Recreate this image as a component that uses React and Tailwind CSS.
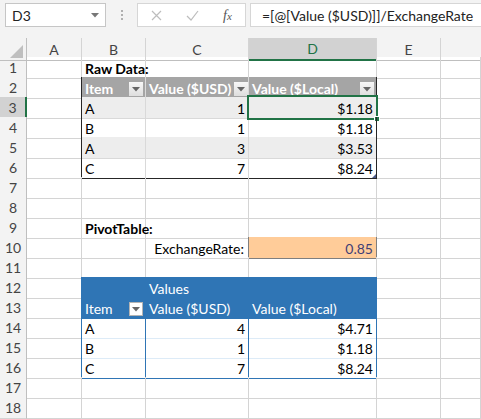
const COLS = 'grid grid-cols-[27px_55px_64px_103px_128px_64px_1fr]'

function Cell({ children, r = 'border-r-[#d4d4d4]', b = 'border-b-[#d4d4d4]', className = '', align = 'justify-start' }) {
  return (
    <div className={`flex items-end border-r border-b ${r} ${b} ${align} ${className}`}>
      {children}
    </div>
  )
}

function Txt({ children, className = '' }) {
  return <span className={`px-[3px] pb-[1px] leading-[17px] whitespace-nowrap ${className}`}>{children}</span>
}

function Drop({ white }) {
  return (
    <span
      className={`mr-[2px] mb-[2px] flex h-[14px] w-[14px] shrink-0 items-center justify-center ${
        white ? 'border border-[#b4b4b4] bg-white' : 'bg-gradient-to-b from-[#f7f7f7] to-[#dedede]'
      }`}
    >
      <svg width="8" height="5" viewBox="0 0 8 5">
        <path d="M0 0h8L4 4.5z" fill="#666" />
      </svg>
    </span>
  )
}

function RowHead({ n, selected }) {
  return (
    <div
      className={`flex items-center justify-center border-b border-b-[#d4d4d4] text-[14px] text-[#444] ${
        selected ? 'border-r-2 border-r-[#217346] bg-[#d2d2d2]' : 'border-r border-r-[#bfbfbf] bg-[#f3f3f3]'
      }`}
    >
      {n}
    </div>
  )
}

function Row({ n, selected, children }) {
  return (
    <div className={`${COLS} h-[20px]`}>
      <RowHead n={n} selected={selected} />
      {children}
    </div>
  )
}

const BK = 'border-r-[#262626]'
const BKb = 'border-b-[#262626]'
const BL = 'border-r-[#2f75b5]'
const BLb = 'border-b-[#2f75b5]'
const LBb = 'border-b-[#ddebf7]'
const GYr = 'border-r-[#d9d9d9]'

const raw = [
  ['A', '1', '$1.18'],
  ['B', '1', '$1.18'],
  ['A', '3', '$3.53'],
  ['C', '7', '$8.24'],
]
const pivot = [
  ['A', '4', '$4.71'],
  ['B', '1', '$1.18'],
  ['C', '7', '$8.24'],
]

export default function App() {
  return (
    <div className="h-[419px] w-[481px] overflow-hidden bg-white font-['Lato','Liberation_Sans',sans-serif] text-[14px] text-black">
      {/* formula bar */}
      <div className="flex h-[38px] items-start bg-[#f3f3f3] pt-[3px]">
        <div className="ml-[5px] flex h-[24px] w-[101px] items-center justify-between border border-[#c6c6c6] bg-white pl-[6px] pr-[6px] text-[14px] text-[#222]">
          <span>D3</span>
          <svg width="8" height="5" viewBox="0 0 8 5">
            <path d="M0 0h8L4 4.5z" fill="#777" />
          </svg>
        </div>
        <div className="flex h-[24px] w-[31px] flex-col items-center justify-center gap-[2px]">
          <span className="h-[2px] w-[2px] bg-[#b0b0b0]" />
          <span className="h-[2px] w-[2px] bg-[#b0b0b0]" />
          <span className="h-[2px] w-[2px] bg-[#b0b0b0]" />
        </div>
        <div className="flex h-[24px] w-[109px] items-center border border-[#d6d6d6] bg-white">
          <svg className="ml-[13px]" width="11" height="11" viewBox="0 0 11 11">
            <path d="M1 1l9 9M10 1l-9 9" stroke="#bdbdbd" strokeWidth="1.2" />
          </svg>
          <svg className="ml-[24px]" width="13" height="11" viewBox="0 0 13 11">
            <path d="M1 6l4 4 7-9" stroke="#bdbdbd" strokeWidth="1.2" fill="none" />
          </svg>
          <span className="ml-[24px] font-['Liberation_Serif',serif] text-[14px] italic text-[#555]">
            f<span className="text-[11px]">x</span>
          </span>
        </div>
        <div className="ml-[4px] flex h-[24px] flex-1 items-center border border-r-0 border-[#d6d6d6] bg-white pl-[11px] text-[14px] text-[#222] whitespace-nowrap">
          =[@[Value ($USD)]]/ExchangeRate
        </div>
      </div>

      {/* column headers */}
      <div className={`${COLS} h-[19px] bg-[#f3f3f3] text-[14px] text-[#444]`}>
        <div className="relative border-r border-b border-r-[#bfbfbf] border-b-[#bfbfbf]">
          <svg className="absolute right-[3px] bottom-[2px]" width="13" height="13" viewBox="0 0 13 13">
            <path d="M13 0V13H0z" fill="#bfbfbf" />
          </svg>
        </div>
        {['A', 'B', 'C'].map((c) => (
          <div key={c} className="flex items-center justify-center border-r border-b border-r-[#d4d4d4] border-b-[#bfbfbf]">
            {c}
          </div>
        ))}
        <div className="flex items-center justify-center border-r border-b-2 border-r-[#d4d4d4] border-b-[#217346] bg-[#d2d2d2] text-[#217346]">
          D
        </div>
        <div className="flex items-center justify-center border-r border-b border-r-[#d4d4d4] border-b-[#bfbfbf]">E</div>
        <div className="border-b border-b-[#bfbfbf]" />
      </div>

      {/* row 1 */}
      <Row n={1}>
        <Cell />
        <Cell b={BKb}>
          <Txt className="font-bold">Raw Data:</Txt>
        </Cell>
        <Cell b={BKb} />
        <Cell b={BKb} />
        <Cell />
        <Cell />
      </Row>

      {/* row 2: table header */}
      <Row n={2}>
        <Cell r={BK} />
        <Cell r={GYr} b="border-b-[#d9d9d9]" align="justify-between" className="bg-[#a5a5a5] text-white font-bold">
          <Txt>Item</Txt>
          <Drop />
        </Cell>
        <Cell r={GYr} b="border-b-[#d9d9d9]" align="justify-between" className="bg-[#a5a5a5] text-white font-bold">
          <Txt>Value ($USD)</Txt>
          <Drop />
        </Cell>
        <Cell r={BK} b="border-b-[#d9d9d9]" align="justify-between" className="bg-[#a5a5a5] text-white font-bold">
          <Txt>Value ($Local)</Txt>
          <Drop />
        </Cell>
        <Cell />
        <Cell />
      </Row>

      {raw.map(([item, usd, local], i) => {
        const last = i === raw.length - 1
        const stripe = i % 2 === 0 ? 'bg-[#ededed]' : ''
        return (
          <Row key={i} n={3 + i} selected={i === 0}>
            <Cell r={BK} />
            <Cell r={GYr} b={last ? BKb : 'border-b-[#d9d9d9]'} className={stripe}>
              <Txt>{item}</Txt>
            </Cell>
            <Cell r={GYr} b={last ? BKb : 'border-b-[#d9d9d9]'} align="justify-end" className={stripe}>
              <Txt>{usd}</Txt>
            </Cell>
            <Cell r={BK} b={last ? BKb : 'border-b-[#d9d9d9]'} align="justify-end" className={`relative ${stripe}`}>
              <Txt>{local}</Txt>
              {i === 0 && (
                <>
                  <span className="pointer-events-none absolute -top-[2px] -left-[2px] -right-[2px] -bottom-[2px] border-2 border-[#217346]" />
                  <span className="absolute -right-[4px] -bottom-[4px] h-[6px] w-[6px] border border-white bg-[#217346]" />
                </>
              )}
              {last && (
                <svg className="absolute right-0 bottom-0" width="4" height="4" viewBox="0 0 4 4">
                  <path d="M4 0V4H0z" fill="#4a5a8a" />
                </svg>
              )}
            </Cell>
            <Cell />
            <Cell />
          </Row>
        )
      })}

      {[7, 8].map((n) => (
        <Row key={n} n={n}>
          <Cell />
          <Cell />
          <Cell />
          <Cell />
          <Cell />
          <Cell />
        </Row>
      ))}

      {/* row 9 */}
      <Row n={9}>
        <Cell />
        <Cell>
          <Txt className="font-bold">PivotTable:</Txt>
        </Cell>
        <Cell />
        <Cell b="border-b-[#7f7f7f]" />
        <Cell />
        <Cell />
      </Row>

      {/* row 10 */}
      <Row n={10}>
        <Cell />
        <Cell />
        <Cell r="border-r-[#7f7f7f]" align="justify-end">
          <Txt className="pr-[4px]">ExchangeRate:</Txt>
        </Cell>
        <Cell r="border-r-[#7f7f7f]" b="border-b-[#7f7f7f]" align="justify-end" className="bg-[#ffcc99] text-[#3f3f76]">
          <Txt>0.85</Txt>
        </Cell>
        <Cell />
        <Cell />
      </Row>

      {/* row 11 */}
      <Row n={11}>
        <Cell />
        <Cell b={BLb} />
        <Cell b={BLb} />
        <Cell b={BLb} />
        <Cell />
        <Cell />
      </Row>

      {/* row 12: pivot header */}
      <Row n={12}>
        <Cell r={BL} />
        <Cell r={BL} b={BLb} className="bg-[#2f75b5]" />
        <Cell r={BL} b={BLb} className="bg-[#2f75b5] text-white">
          <Txt>Values</Txt>
        </Cell>
        <Cell r={BL} b={BLb} className="bg-[#2f75b5]" />
        <Cell />
        <Cell />
      </Row>

      {/* row 13 */}
      <Row n={13}>
        <Cell r={BL} />
        <Cell r={BL} b={BLb} align="justify-between" className="bg-[#2f75b5] text-white">
          <Txt>Item</Txt>
          <Drop white />
        </Cell>
        <Cell r={BL} b={BLb} className="bg-[#2f75b5] text-white">
          <Txt>Value ($USD)</Txt>
        </Cell>
        <Cell r={BL} b={BLb} className="bg-[#2f75b5] text-white">
          <Txt>Value ($Local)</Txt>
        </Cell>
        <Cell />
        <Cell />
      </Row>

      {pivot.map(([item, usd, local], i) => {
        const b = i === pivot.length - 1 ? BLb : LBb
        return (
          <Row key={i} n={14 + i}>
            <Cell r={BL} />
            <Cell r={BL} b={b}>
              <Txt>{item}</Txt>
            </Cell>
            <Cell r={BL} b={b} align="justify-end">
              <Txt>{usd}</Txt>
            </Cell>
            <Cell r={BL} b={b} align="justify-end">
              <Txt>{local}</Txt>
            </Cell>
            <Cell />
            <Cell />
          </Row>
        )
      })}

      {[17, 18].map((n) => (
        <Row key={n} n={n}>
          <Cell />
          <Cell />
          <Cell />
          <Cell />
          <Cell />
          <Cell />
        </Row>
      ))}
    </div>
  )
}
